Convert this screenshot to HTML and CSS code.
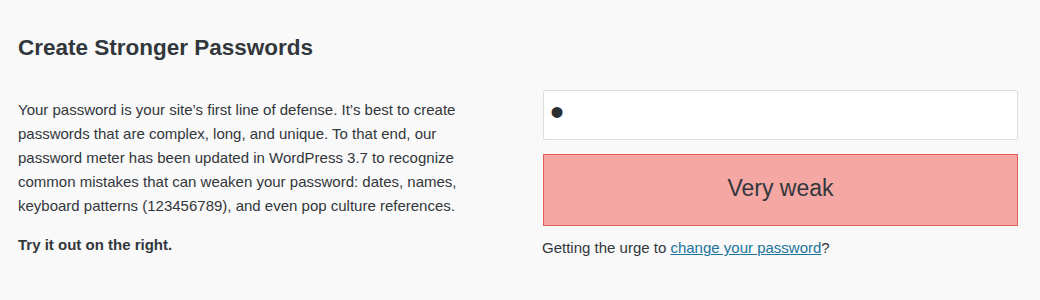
FILE: index.html
```html
<!DOCTYPE html>
<html>
<head>
    <title>Create Stronger Passwords</title>
    <link rel="stylesheet" href="styles.css">
</head>
<body>
    <div class="feature">
        <h2>Create Stronger Passwords</h2>
        <div class="columns">
            <div class="col-text">
                <p>Your password is your site’s first line of defense. It’s best to create passwords that are complex, long, and unique. To that end, our password meter has been updated in WordPress 3.7 to recognize common mistakes that can weaken your password: dates, names, keyboard patterns (123456789), and even pop culture references.</p>
                <p class="try"><strong>Try it out on the right.</strong></p>
            </div>
            <div class="col-demo">
                <input type="password" class="pass-input" value="a">
                <div class="pass-strength short">Very weak</div>
                <p class="urge">Getting the urge to <a href="#">change your password</a>?</p>
            </div>
        </div>
    </div>
</body>
</html>
```

FILE: styles.css
```css
body, html {
    margin: 0;
    background-color: #f9f9f9;
    color: #32373c;
    font-family: "Liberation Sans", Arial, sans-serif;
}

.feature {
    padding: 35px 22px 0 18px;
}

h2 {
    margin: 0;
    font-size: 22.5px;
    line-height: 26.4px;
    font-weight: bold;
}

.columns {
    display: flex;
    justify-content: space-between;
    margin-top: 29px;
}

.col-text {
    width: 462px;
    padding-top: 8px;
}

.col-text p {
    margin: 0;
    font-size: 15px;
    line-height: 24px;
}

.col-text .try {
    margin-top: 15px;
}

.col-demo {
    width: 475px;
}

.pass-input {
    display: block;
    box-sizing: border-box;
    width: 100%;
    height: 50px;
    margin: 0;
    padding: 0 6px 6px;
    border: 1px solid #dddddd;
    border-radius: 2px;
    background: #fff;
    color: #2a2e33;
    font-family: "Liberation Sans", Arial, sans-serif;
    font-size: 40px;
    outline: none;
}

.pass-strength {
    box-sizing: border-box;
    height: 72px;
    margin-top: 14px;
    border: 1px solid #e35b5b;
    text-align: center;
    font-size: 23px;
    line-height: 67px;
}

.short {
    background-color: #f4a7a3;
}

.urge {
    margin: 10px 0 0 -1px;
    font-size: 15px;
    line-height: 24px;
}

.urge a {
    color: #21759b;
}
```
